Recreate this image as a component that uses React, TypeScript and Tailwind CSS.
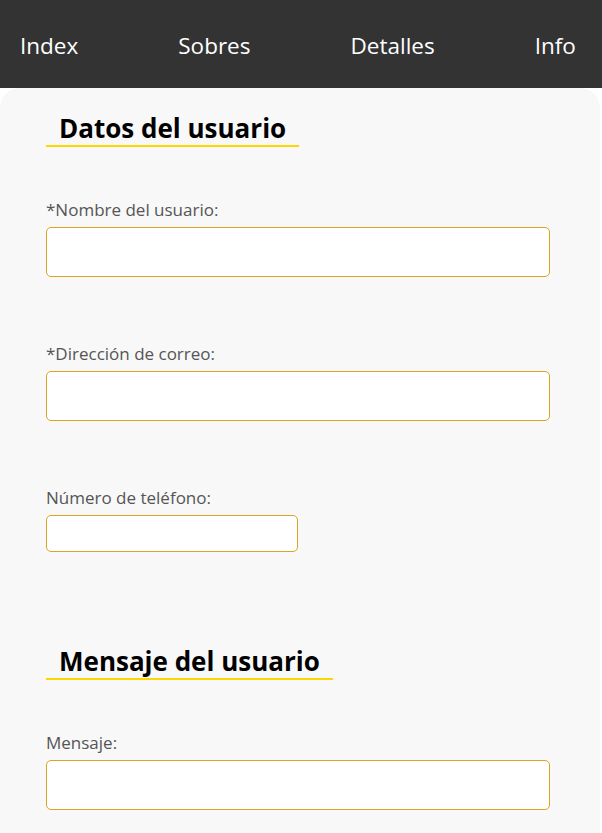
export default function App() {
  const navItems = ['Index', 'Sobres', 'Detalles', 'Info'];

  return (
    <div className="min-h-[833px] w-full bg-white font-['Open_Sans',sans-serif]">
      {/* Nav */}
      <nav className="flex h-[88px] items-center gap-[100px] bg-[#333333] px-[20px] pt-[4px]">
        {navItems.map((item) => (
          <a key={item} href="#" className="text-[22.5px] text-white">
            {item}
          </a>
        ))}
      </nav>

      {/* Form panel */}
      <div className="mr-[2px] rounded-t-[20px] bg-[#f8f8f8] pl-[46px] pr-[50px] pt-[24px] pb-[40px]">
        <h2 className="inline-block border-b-2 border-[#ffd700] px-[13px] pb-[1px] text-[26px] font-bold leading-[32px] text-black">
          Datos del usuario
        </h2>

        <div className="mt-[52px] flex flex-col">
          <label className="mb-[6px] text-[17px] leading-[22px] text-[#555555]">*Nombre del usuario:</label>
          <input type="text" className="h-[50px] w-full rounded-[5px] border border-[#daa520] bg-white outline-none" />
        </div>

        <div className="mt-[66px] flex flex-col">
          <label className="mb-[6px] text-[17px] leading-[22px] text-[#555555]">*Dirección de correo:</label>
          <input type="email" className="h-[50px] w-full rounded-[5px] border border-[#daa520] bg-white outline-none" />
        </div>

        <div className="mt-[66px] flex flex-col">
          <label className="mb-[6px] text-[17px] leading-[22px] text-[#555555]">Número de teléfono:</label>
          <input type="tel" className="h-[37px] w-[252px] rounded-[5px] border border-[#daa520] bg-white outline-none" />
        </div>

        <h2 className="mt-[93px] inline-block border-b-2 border-[#ffd700] px-[13px] pb-[1px] text-[26px] font-bold leading-[32px] text-black">
          Mensaje del usuario
        </h2>

        <div className="mt-[52px] flex flex-col">
          <label className="mb-[6px] text-[17px] leading-[22px] text-[#555555]">Mensaje:</label>
          <input type="text" className="h-[50px] w-full rounded-[5px] border border-[#daa520] bg-white outline-none" />
        </div>
      </div>
    </div>
  );
}
